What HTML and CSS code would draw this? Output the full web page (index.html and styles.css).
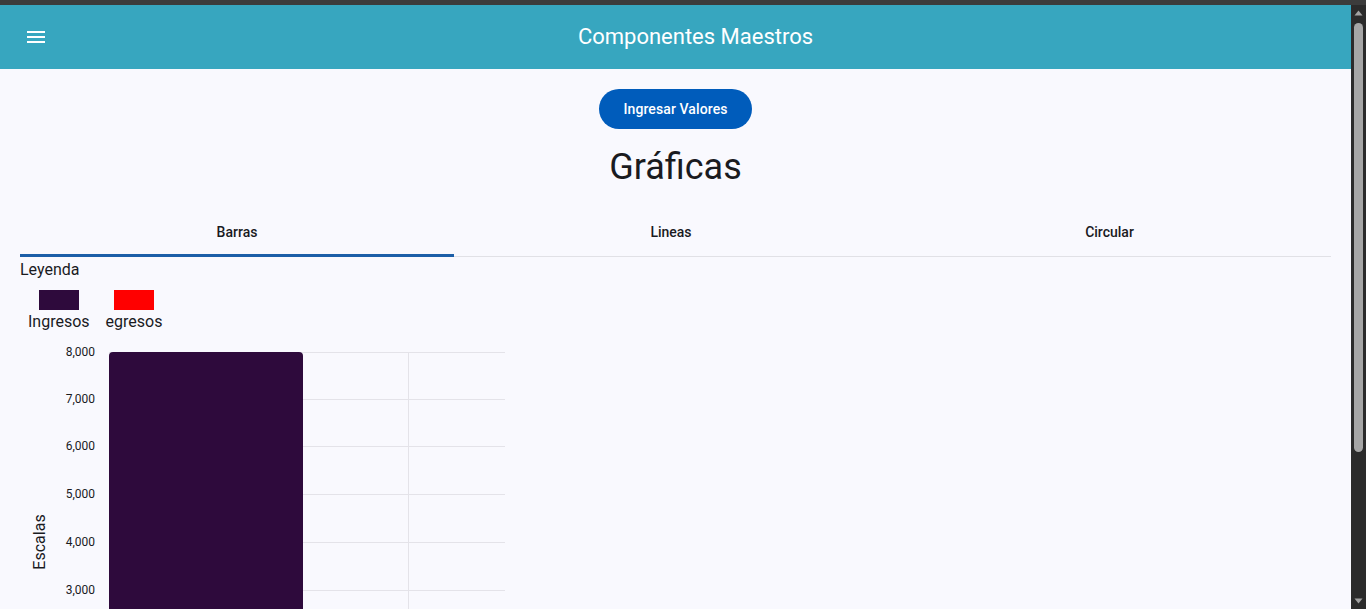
FILE: index.html
```html
<!DOCTYPE html>
<html lang="es">
<head>
<meta charset="utf-8">
<title>Componentes Maestros</title>
<link rel="stylesheet" href="styles.css">
</head>
<body>
<div class="frame">
  <div class="viewport">
    <div class="page">
      <header class="toolbar">
        <button class="menu-btn" aria-label="Menú">
          <svg width="24" height="24" viewBox="0 0 24 24"><path fill="#fff" d="M3 18h18v-2H3v2zm0-5h18v-2H3v2zm0-7v2h18V6H3z"/></svg>
        </button>
        <span class="toolbar-title">Componentes Maestros</span>
      </header>
      <main class="content">
        <div class="actions">
          <button class="primary-btn">Ingresar Valores</button>
        </div>
        <h1 class="heading">Gráficas</h1>
        <nav class="tabs">
          <div class="tab active">Barras</div>
          <div class="tab">Lineas</div>
          <div class="tab">Circular</div>
        </nav>
        <div class="legend-title">Leyenda</div>
        <div class="legend">
          <div class="legend-item">
            <span class="swatch swatch-in"></span>
            <span class="legend-label">Ingresos</span>
          </div>
          <div class="legend-item">
            <span class="swatch swatch-out"></span>
            <span class="legend-label">egresos</span>
          </div>
        </div>
        <svg class="chart" width="500" height="280" viewBox="0 0 500 280">
          <g stroke="#e4e3e9" stroke-width="1">
            <line x1="89" y1="16.5" x2="485" y2="16.5"/>
            <line x1="89" y1="63.5" x2="485" y2="63.5"/>
            <line x1="89" y1="110.5" x2="485" y2="110.5"/>
            <line x1="89" y1="158.5" x2="485" y2="158.5"/>
            <line x1="89" y1="206.5" x2="485" y2="206.5"/>
            <line x1="89" y1="254.5" x2="485" y2="254.5"/>
            <line x1="388.5" y1="16" x2="388.5" y2="280"/>
          </g>
          <path fill="#2e0a3c" d="M89,280 V20 Q89,16 93,16 H279 Q283,16 283,20 V280 Z"/>
          <g class="tick" text-anchor="end" dominant-baseline="central">
            <text x="75" y="16">8,000</text>
            <text x="75" y="63">7,000</text>
            <text x="75" y="110">6,000</text>
            <text x="75" y="158">5,000</text>
            <text x="75" y="206">4,000</text>
            <text x="75" y="254">3,000</text>
          </g>
          <text class="axis-title" x="0" y="0" transform="translate(25,206) rotate(-90)" text-anchor="middle">Escalas</text>
        </svg>
      </main>
    </div>
    <div class="scrollbar">
      <svg class="arrow" width="15" height="15" viewBox="0 0 15 15"><path fill="#a3a3a3" d="M3.5 10.5 L7.5 5.5 L11.5 10.5 Z"/></svg>
      <div class="track"><div class="thumb"></div></div>
      <svg class="arrow" width="15" height="15" viewBox="0 0 15 15"><path fill="#a3a3a3" d="M3.5 4.5 L7.5 9.5 L11.5 4.5 Z"/></svg>
    </div>
  </div>
</div>
</body>
</html>
```
FILE: styles.css
```css
* { box-sizing: border-box; }
html, body {
  margin: 0;
  height: 100%;
  overflow: hidden;
  background: #3c3c3c;
  font-family: Roboto, "Liberation Sans", Arial, sans-serif;
}
.frame {
  height: 100vh;
  display: flex;
  flex-direction: column;
  border-top: 5px solid #3c3c3c;
}
.viewport {
  flex: 1;
  min-height: 0;
  display: flex;
}
.page {
  flex: 1;
  min-width: 0;
  overflow: hidden;
  background: #f9f9fe;
  color: #1a1b1f;
}
.toolbar {
  height: 64px;
  display: flex;
  align-items: center;
  padding: 0 16px;
  background: #37a6bf;
  color: #fff;
}
.menu-btn {
  width: 40px;
  height: 40px;
  padding: 0;
  border: 0;
  background: transparent;
  display: flex;
  align-items: center;
  justify-content: center;
}
.toolbar-title {
  flex: 1;
  text-align: center;
  font-size: 22px;
  font-weight: 400;
  line-height: 28px;
}
.content {
  padding: 0 20px;
}
.actions {
  display: flex;
  justify-content: center;
  padding-top: 20px;
}
.primary-btn {
  height: 40px;
  padding: 0 24px;
  border: 0;
  border-radius: 20px;
  background: #005cbb;
  color: #fff;
  font-family: inherit;
  font-size: 14px;
  font-weight: 500;
  letter-spacing: 0.1px;
}
.heading {
  margin: 18px 0 21px;
  text-align: center;
  font-size: 36px;
  line-height: 40px;
  font-weight: 400;
  color: #1a1b1f;
}
.tabs {
  display: grid;
  grid-template-columns: 434px 434px 1fr;
  border-bottom: 1px solid #e1e1e6;
}
.tab {
  position: relative;
  height: 48px;
  display: flex;
  align-items: center;
  justify-content: center;
  font-size: 14px;
  font-weight: 500;
  color: #1a1b1f;
}
.tab.active::after {
  content: "";
  position: absolute;
  left: 0;
  right: 0;
  bottom: -1px;
  height: 3px;
  background: #1c5fa8;
}
.legend-title {
  margin-top: 2px;
  font-size: 16px;
  line-height: 22px;
}
.legend {
  display: flex;
  margin-top: 9px;
}
.legend-item {
  display: flex;
  flex-direction: column;
  align-items: center;
  padding: 0 8px;
}
.swatch {
  width: 40px;
  height: 20px;
}
.swatch-in { background: #2e0a3c; }
.swatch-out { background: #ff0000; }
.legend-label {
  padding-top: 2px;
  font-size: 16px;
  line-height: 20px;
}
.chart {
  display: block;
  margin-top: 4px;
}
.tick {
  font-size: 12px;
  fill: #1a1b1f;
}
.axis-title {
  font-size: 16px;
  fill: #1a1b1f;
}
.scrollbar {
  width: 15px;
  background: #2b2b2b;
  display: flex;
  flex-direction: column;
}
.arrow {
  display: block;
  flex: none;
}
.track {
  flex: 1;
  padding: 3px 3px 0 3px;
}
.thumb {
  height: 429px;
  border-radius: 5px;
  background: #a6a6a6;
}
```
